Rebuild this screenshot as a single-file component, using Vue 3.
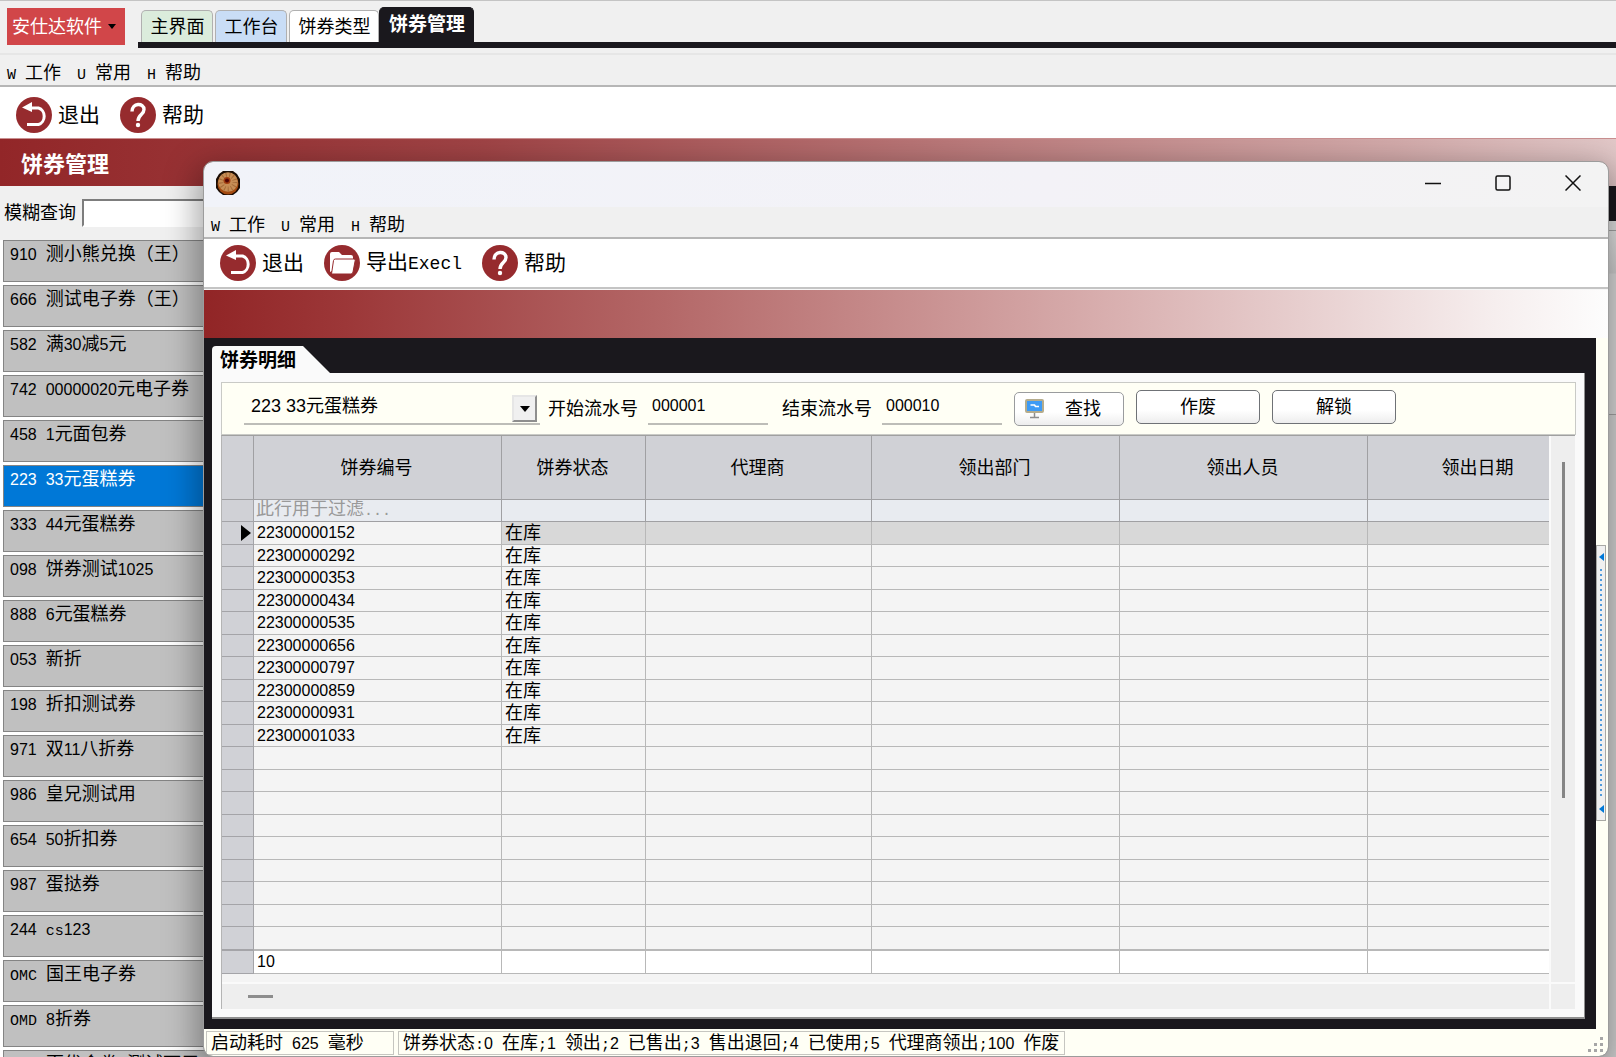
<script setup>
import { ref, h } from "vue"

const coupons = [
  "910 测小熊兑换（王）",
  "666 测试电子券（王）",
  "582 满30减5元",
  "742 00000020元电子券",
  "458 1元面包券",
  "223 33元蛋糕券",
  "333 44元蛋糕券",
  "098 饼券测试1025",
  "888 6元蛋糕券",
  "053 新折",
  "198 折扣测试券",
  "971 双11八折券",
  "986 皇兄测试用",
  "654 50折扣券",
  "987 蛋挞券",
  "244 cs123",
  "OMC 国王电子券",
  "OMD 8折券",
  "OME 百优会券(测试可用"
]

const tabs = [
  { name: "主界面", cls: "green" },
  { name: "工作台", cls: "blue" },
  { name: "饼券类型", cls: "plain" },
  { name: "饼券管理", cls: "active" }
]

const menus = ["W 工作", "U 常用", "H 帮助"]

const columns = ["饼券编号", "饼券状态", "代理商", "领出部门", "领出人员", "领出日期"]

const rows = [
  "22300000152",
  "22300000292",
  "22300000353",
  "22300000434",
  "22300000535",
  "22300000656",
  "22300000797",
  "22300000859",
  "22300000931",
  "22300001033"
]
const emptyRows = 9

const selected = ref("223 33元蛋糕券")
const keyword = ref("")
const startNo = ref("000001")
const endNo = ref("000010")

// digits and latin letters are set half as wide as a Chinese character
const Mixed = (props) =>
  h(
    "span",
    { class: "mixed" },
    props.text
      .split(/(\d+)/)
      .flatMap((part) => part.split(/([ -/:-~]+)/))
      .filter((part) => part)
      .map((part) => {
        if (/^\d/.test(part)) return h("span", { class: "num" }, part)
        if (/^[ -~]/.test(part)) return h("span", { class: "lat" }, part)
        return part
      })
  )
Mixed.props = ["text"]
</script>

<template>
  <div class="app">
    <header class="top">
      <button class="brand">安仕达软件<i class="caret"></i></button>
      <nav class="tabs">
        <button v-for="t in tabs" :key="t.name" class="tab" :class="t.cls">{{ t.name }}</button>
      </nav>
    </header>

    <nav class="menu main-menu">
      <button v-for="m in menus" :key="m"><Mixed :text="m" /></button>
    </nav>

    <div class="toolbar main-toolbar">
      <button>
        <svg viewBox="0 0 36 36">
          <circle cx="18" cy="18" r="18" fill="#962b2e" />
          <path d="M11 27.500h11.500a7.500 8.500 0 0 0 0-16.500H14" fill="none" stroke="#fff" stroke-width="3" />
          <path d="M6 10.500L16 5v10z" fill="#fff" />
        </svg>
        退出
      </button>
      <button>
        <svg viewBox="0 0 36 36">
          <circle cx="18" cy="18" r="18" fill="#962b2e" />
          <path d="M12 14.500c0-9 12-9 12-2 0 5-6 5-6 11.500" fill="none" stroke="#fff" stroke-width="3.400" />
          <circle cx="18" cy="28" r="2.200" fill="#fff" />
        </svg>
        帮助
      </button>
    </div>

    <div class="banner main-banner">饼券管理</div>

    <div class="main">
      <aside class="side">
        <div class="search">
          <label for="kw">模糊查询</label>
          <input id="kw" v-model="keyword" />
        </div>
        <ul class="list">
          <li
            v-for="c in coupons"
            :key="c"
            :class="{ on: c === selected }"
            @click="selected = c"
          >
            <Mixed :text="c" />
          </li>
        </ul>
      </aside>
      <section class="rest">
        <div class="rest-black"></div>
        <div class="rest-line"></div>
        <div class="rest-head"></div>
      </section>
    </div>

    <div class="window">
      <div class="titlebar">
        <svg class="cookie" viewBox="0 0 24 24">
          <path d="M7 0h10l4 3 3 5v9l-3 4-4 3H7l-4-3-3-4V8l3-5z" fill="#1a0c04" />
          <circle cx="12" cy="13" r="10.500" fill="#a44a10" />
          <circle cx="12" cy="11" r="9.800" fill="#c68d55" />
          <circle cx="12" cy="11" r="7" fill="none" stroke="#a56c3a" stroke-width="5" stroke-dasharray="1 2.400" />
          <circle cx="11" cy="9.500" r="3.500" fill="#a03c10" />
          <circle cx="11" cy="9.500" r="2" fill="#500404" />
        </svg>
        <div class="controls">
          <button aria-label="最小化">
            <svg viewBox="0 0 16 16"><path d="M0 8.500h16" /></svg>
          </button>
          <button aria-label="最大化">
            <svg viewBox="0 0 16 16"><rect x="1" y="1" width="14" height="14" rx="1.500" /></svg>
          </button>
          <button aria-label="关闭">
            <svg viewBox="0 0 16 16"><path d="M.5 .5l15 15M15.500 .5l-15 15" /></svg>
          </button>
        </div>
      </div>

      <nav class="menu win-menu">
        <button v-for="m in menus" :key="m"><Mixed :text="m" /></button>
      </nav>

      <div class="toolbar win-toolbar">
        <button>
          <svg viewBox="0 0 36 36">
            <circle cx="18" cy="18" r="18" fill="#962b2e" />
            <path d="M11 27.500h11.500a7.500 8.500 0 0 0 0-16.500H14" fill="none" stroke="#fff" stroke-width="3" />
            <path d="M6 10.500L16 5v10z" fill="#fff" />
          </svg>
          退出
        </button>
        <button>
          <svg viewBox="0 0 36 36">
            <circle cx="18" cy="18" r="18" fill="#962b2e" />
            <path d="M6 27V9q0-2 2-2h7l3 3h9q2 0 2 2v2" fill="#fff" />
            <path d="M7.500 29l2-13.500q.3-1.500 2-1.500H30q1.500 0 1.200 1.500L29 27q-.3 2-2 2z" fill="#fff" stroke="#962b2e" />
          </svg>
          <Mixed text="导出Execl" />
        </button>
        <button>
          <svg viewBox="0 0 36 36">
            <circle cx="18" cy="18" r="18" fill="#962b2e" />
            <path d="M12 14.500c0-9 12-9 12-2 0 5-6 5-6 11.500" fill="none" stroke="#fff" stroke-width="3.400" />
            <circle cx="18" cy="28" r="2.200" fill="#fff" />
          </svg>
          帮助
        </button>
      </div>

      <div class="banner win-banner"></div>

      <div class="body">
        <div class="frame">
          <div class="sheet-tab"><span>饼券明细</span></div>
          <div class="sheet">
            <form class="filter" @submit.prevent>
              <div class="combo">
                <select v-model="selected" aria-label="饼券类型">
                  <option v-for="c in coupons" :key="c">{{ c }}</option>
                </select>
                <i class="drop"></i>
              </div>
              <label for="start">开始流水号</label>
              <input id="start" v-model="startNo" />
              <label for="end" class="second">结束流水号</label>
              <input id="end" v-model="endNo" />
              <button class="btn find">
                <svg viewBox="0 0 20 20">
                  <rect x="1" y="1" width="17" height="12" rx="1" fill="#3e9bf5" stroke="#b5ac8c" stroke-width="2" />
                  <path d="M5.500 6h4l1 1.500h3.500" fill="none" stroke="#fff" stroke-width="1.600" />
                  <path d="M9.500 14v4M5 18.500h9" stroke="#8d8d8d" stroke-width="1.500" />
                </svg>
                查找
              </button>
              <button class="btn">作废</button>
              <button class="btn">解锁</button>
            </form>

            <div class="grid">
              <div class="grid-view">
                <table>
                  <colgroup>
                    <col class="c0" />
                    <col class="c1" />
                    <col class="c2" />
                    <col class="c3" />
                    <col class="c1" />
                    <col class="c1" />
                    <col class="c4" />
                  </colgroup>
                  <thead>
                    <tr>
                      <th></th>
                      <th v-for="col in columns" :key="col">{{ col }}</th>
                    </tr>
                    <tr class="filter-row">
                      <td class="ind"></td>
                      <td><Mixed text="此行用于过滤..." /></td>
                      <td v-for="n in 5" :key="n"></td>
                    </tr>
                  </thead>
                  <tbody>
                    <tr v-for="(code, i) in rows" :key="code" :class="{ current: i === 0 }">
                      <td class="ind"><i v-if="i === 0" class="pointer"></i></td>
                      <td class="code">{{ code }}</td>
                      <td>在库</td>
                      <td v-for="n in 4" :key="n"></td>
                    </tr>
                    <tr v-for="n in emptyRows" :key="'e' + n">
                      <td class="ind"></td>
                      <td v-for="k in 6" :key="k"></td>
                    </tr>
                  </tbody>
                  <tfoot>
                    <tr>
                      <td class="ind"></td>
                      <td class="code">{{ rows.length }}</td>
                      <td v-for="n in 5" :key="n"></td>
                    </tr>
                  </tfoot>
                </table>
              </div>
              <div class="vbar"><i></i></div>
              <div class="hbar"><i></i></div>
              <div class="corner"></div>
            </div>
          </div>
        </div>
        <div class="gutter">
          <div class="splitter">
            <i class="arrow"></i>
            <i class="dots"></i>
            <i class="arrow"></i>
          </div>
        </div>
      </div>

      <footer class="status">
        <div class="cell time"><Mixed text="启动耗时 625 毫秒" /></div>
        <div class="cell"><Mixed text="饼券状态:0 在库;1 领出;2 已售出;3 售出退回;4 已使用;5 代理商领出;100 作废" /></div>
        <svg class="grip" viewBox="0 0 16 16">
          <path d="M13 0h3v3h-3zM7 6h3v3H7zM13 6h3v3h-3zM1 12h3v3H1zM7 12h3v3H7zM13 12h3v3h-3z" fill="#a6a6a6" />
        </svg>
      </footer>
    </div>
  </div>
</template>

<style>
body {
  margin: 0;
}

.mixed {
  white-space: pre;
}

.mixed .num {
  font-size: 16px;
}

.mixed .lat {
  font-family: "Liberation Mono", monospace;
  font-size: 15px;
}
</style>

<style scoped>
.app {
  position: relative;
  display: flex;
  flex-direction: column;
  height: 100vh;
  overflow: hidden;
  box-sizing: border-box;
  border-top: 1px solid #c4c4c4;
  background: #f0f0f0;
  color: #000;
  font-family: "Liberation Sans", "Noto Sans CJK SC", sans-serif;
  font-size: 18px;
  line-height: 22px;
}

.app * {
  box-sizing: border-box;
}

button,
input,
select {
  font: inherit;
  color: inherit;
  margin: 0;
  padding: 0;
  border: 0;
  background: none;
}

/* top */
.top {
  display: flex;
  align-items: flex-start;
  height: 54px;
  flex: none;
  padding: 7px 0 0 7px;
  border-bottom: 2px solid #e6e6e6;
}

.brand {
  display: flex;
  align-items: center;
  gap: 6px;
  width: 118px;
  height: 37px;
  padding-left: 5px;
  background: #d14649;
  color: #fff;
  white-space: nowrap;
}

.caret {
  border: 4px solid transparent;
  border-top: 5px solid #000;
  border-bottom: 0;
}

.tabs {
  display: flex;
  flex: 1;
  align-items: flex-end;
  height: 40px;
  margin-left: 13px;
  padding-left: 3px;
  border-bottom: 6px solid #1a181d;
}

.tab {
  height: 32px;
  width: 72px;
  margin-right: 2px;
  padding-left: 1px;
  border: 1px solid #b0b0b0;
  border-bottom: 0;
  border-radius: 5px 5px 0 0;
  white-space: nowrap;
}

.tab.green {
  background: #dbecdc;
}

.tab.blue {
  background: #c9ddf6;
}

.tab.plain {
  width: 90px;
  margin-right: 0;
  background: #fff;
}

.tab.active {
  width: 95px;
  height: 35px;
  border-color: #1a181d;
  background: #1a181d;
  color: #fff;
  font-size: 19px;
  font-weight: bold;
}

/* menus and toolbars */
.menu {
  display: flex;
  align-items: center;
  flex: none;
  gap: 16px;
  padding: 8px 0 0 7px;
  border-bottom: 2px solid #b6b6b6;
  background: #f0f0f0;
}

.main-menu {
  height: 32px;
}

.toolbar {
  display: flex;
  align-items: center;
  flex: none;
  gap: 20px;
  padding-left: 16px;
  background: #fff;
  font-size: 21px;
}

.toolbar button {
  display: flex;
  align-items: center;
  gap: 6px;
}

.toolbar svg {
  width: 36px;
  height: 36px;
}

.toolbar :deep(.lat) {
  font-size: 18px;
}

.main-toolbar {
  height: 51px;
  padding-top: 5px;
}

.banner {
  flex: none;
  height: 48px;
}

.main-banner {
  padding-left: 21px;
  border-top: 1px solid #c98f90;
  background: linear-gradient(90deg, #922628, #a04446 30%, #d3aaaa 86%, #e2c8c8);
  color: #fff;
  font-size: 22px;
  font-weight: bold;
  line-height: 51px;
}

.main {
  display: flex;
  flex: 1;
  min-height: 0;
}

.side {
  width: 400px;
}

.search {
  display: flex;
  align-items: center;
  height: 54px;
  padding-left: 4px;
}

.search input {
  flex: 1;
  height: 28px;
  margin-left: 6px;
  border: 2px solid #fff;
  border-top-color: #7d7d7d;
  border-left-color: #7d7d7d;
  background: #fff;
}

.list {
  display: flex;
  flex-direction: column;
  gap: 3px;
  margin: 0;
  padding: 0 0 0 3px;
  background: #fff;
  list-style: none;
}

.list li {
  flex: none;
  height: 42px;
  padding: 2px 0 0 6px;
  border: 1px solid #848484;
  background: #c0c0c0;
}

.list li.on {
  background: #0078d7;
  color: #fff;
}

.rest {
  flex: 1;
  background: #d9d9d9;
}

.rest-black {
  height: 35px;
  background: #1a181d;
}

.rest-line {
  height: 10px;
  border-bottom: 1px solid #a6a6a6;
  background: #e4e4e4;
}

.rest-head {
  height: 184px;
  border-bottom: 1px solid #a6a6a6;
  background: linear-gradient(#e8e8e8, #d2d2d2 42px, #dedede 43px);
}

/* floating window */
.window {
  position: absolute;
  top: 161px;
  right: 8px;
  bottom: 1px;
  left: 204px;
  display: flex;
  flex-direction: column;
  overflow: hidden;
  border-radius: 9px;
  background: #fffff5;
  outline: 1px solid #9c9c9c;
  box-shadow: 0 12px 32px 8px rgba(0, 0, 0, 0.34);
}

.titlebar {
  display: flex;
  flex: none;
  height: 45px;
  padding: 9px 19px 0 12px;
  background: linear-gradient(90deg, #f1f3f9, #f3f2f7 60%, #f3f3f3);
}

.cookie {
  width: 24px;
  height: 24px;
}

.controls {
  display: flex;
  gap: 38px;
  margin-left: auto;
}

.controls button {
  width: 32px;
  height: 24px;
}

.controls svg {
  display: block;
  width: 16px;
  height: 16px;
  margin: 4px auto;
  fill: none;
  stroke: #111;
  stroke-width: 1.5;
}

.win-menu {
  height: 32px;
}

.win-toolbar {
  height: 48px;
}

.win-banner {
  height: 51px;
  border-top: 2px solid #c4c4c4;
  background: linear-gradient(90deg, #912526, #9c3738 10%, #b36666 32%, #d9b0b0 65%, #f6eeee 92%, #fdfdfd);
  box-shadow: inset 0 1px #f6f6f6;
}

.body {
  display: flex;
  flex: 1;
  min-height: 0;
}

.frame {
  display: flex;
  flex: 1;
  flex-direction: column;
  min-width: 0;
  padding: 8px 11px 10px 8px;
  background: #1a181d;
}

.sheet-tab {
  width: 118px;
  height: 27px;
  padding-left: 8px;
  border-radius: 4px 0 0 0;
  background: #fafafa;
  clip-path: polygon(0 0, 91px 0, 100% 100%, 0 100%);
  font-size: 19px;
  font-weight: bold;
  line-height: 30px;
}

.sheet {
  display: flex;
  flex: 1;
  flex-direction: column;
  min-height: 0;
  padding: 9px 8px 8px 9px;
  border-right: 1px solid #8f8f8f;
  border-bottom: 2px solid #8f8f8f;
  background: #fafafa;
}

.filter {
  display: flex;
  flex: none;
  height: 53px;
  padding: 7px 0 0 22px;
  border: 1px solid #c9cac6;
  background: #fffff5;
}

.combo {
  position: relative;
  width: 296px;
  height: 35px;
  border-bottom: 2px solid #bdbdb8;
}

.combo select {
  width: 100%;
  height: 31px;
  padding-left: 7px;
  appearance: none;
}

.drop {
  position: absolute;
  top: 5px;
  right: 3px;
  display: flex;
  align-items: center;
  justify-content: center;
  width: 25px;
  height: 27px;
  border: 2px solid #e6e6e6;
  border-right-color: #8e8e8e;
  border-bottom-color: #8e8e8e;
  background: #f0f0f0;
  pointer-events: none;
}

.drop::before {
  content: "";
  border: 5px solid transparent;
  border-top: 6px solid #000;
  border-bottom: 0;
}

.filter label {
  height: 35px;
  padding-left: 8px;
  line-height: 38px;
}

.filter label.second {
  padding-left: 14px;
}

.filter input {
  width: 120px;
  height: 35px;
  margin-left: 10px;
  padding: 0 0 2px 4px;
  border-bottom: 2px solid #bdbdb8;
  font-size: 16px;
}

.btn {
  width: 124px;
  height: 34px;
  margin-left: 12px;
  border: 1px solid #6f7276;
  border-radius: 5px;
  background: linear-gradient(#fff 60%, #ededed);
}

.btn.find {
  display: flex;
  align-items: center;
  gap: 20px;
  width: 110px;
  margin-top: 2px;
  padding-left: 10px;
  border-color: #9a9c9e;
}

.btn svg {
  width: 20px;
  height: 20px;
}

/* grid */
.grid {
  display: grid;
  flex: 1;
  grid-template-columns: 1fr 24px;
  grid-template-rows: 1fr 25px;
  gap: 2px;
  min-height: 0;
  margin-right: 1px;
  border-top: 1px solid #a0a0a0;
  border-left: 1px solid #b4b4b4;
}

.grid-view {
  min-width: 0;
  overflow: hidden;
  background: #f4f4f4;
}

table {
  width: 1365px;
  table-layout: fixed;
  border-spacing: 0;
}

.c0 {
  width: 32px;
}

.c1 {
  width: 248px;
}

.c2 {
  width: 144px;
}

.c3 {
  width: 226px;
}

.c4 {
  width: 222px;
}

th,
td {
  height: 22px;
  padding: 0 0 0 3px;
  overflow: hidden;
  border-right: 1px solid #b8b8b8;
  border-bottom: 1px solid #b8b8b8;
  line-height: 20px;
  text-align: left;
  white-space: nowrap;
}

th {
  height: 64px;
  padding: 0 2px 0 0;
  border-color: #a0a0a3;
  background: #d0d1d6;
  font-weight: normal;
  text-align: center;
}

.filter-row td {
  padding-left: 2px;
  border-color: #a0a0a3;
  background: #e8ebf0;
  color: #999;
  line-height: 18px;
}

tbody tr:nth-child(odd) td {
  height: 23px;
}

tbody td {
  background: #f4f4f4;
}

.current td {
  background: #d8d8d8;
}

td.code {
  font-size: 16px;
}

.current td.code {
  background: #f4f4f4;
}

tr td.ind {
  border-color: #a4a4a8;
  background: #d0d1d6;
}

.pointer {
  display: block;
  width: 0;
  margin-left: 16px;
  border: 8px solid transparent;
  border-left: 10px solid #000;
  border-right: 0;
}

tfoot td {
  height: 24px;
  border-top: 1px solid #b8b8b8;
  background: #fff;
}

.vbar,
.hbar,
.corner {
  background: #eee;
}

.vbar i {
  display: block;
  width: 3px;
  height: 336px;
  margin: 26px 0 0 11px;
  background: #858585;
}

.hbar {
  padding: 11px 0 0 26px;
}

.hbar i {
  display: block;
  width: 25px;
  height: 3px;
  background: #8d8d8d;
}

.gutter {
  width: 12px;
  padding-top: 207px;
}

.splitter {
  display: flex;
  flex-direction: column;
  align-items: center;
  justify-content: space-between;
  width: 10px;
  height: 276px;
  padding: 7px 0;
  border: 1px solid #a8a8a4;
  background: #f0f0f0;
}

.arrow {
  border: 4px solid transparent;
  border-right: 5px solid #0078d7;
  border-left: 0;
}

.dots {
  width: 2px;
  height: 228px;
  background: repeating-linear-gradient(#4f9bdc 0 2px, transparent 2px 5px);
}

.status {
  display: flex;
  flex: none;
  gap: 4px;
  height: 27px;
  padding: 2px 5px 1px 2px;
}

.cell {
  height: 24px;
  padding: 0 5px 0 4px;
  border: 1px solid #c6c6c0;
  white-space: nowrap;
}

.time {
  width: 188px;
}

.grip {
  width: 16px;
  height: 16px;
  margin: 6px 0 0 auto;
}
</style>
